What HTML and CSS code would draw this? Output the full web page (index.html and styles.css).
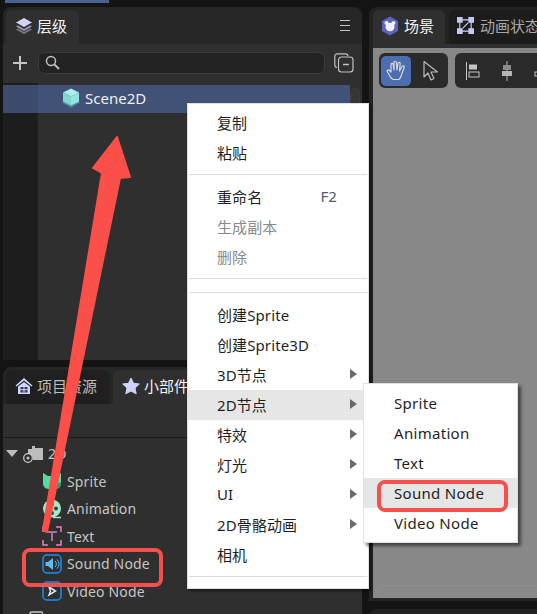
FILE: index.html
```html
<!DOCTYPE html>
<html lang="en">

<head>
    <meta charset="UTF-8">
    <title>LayaAir IDE</title>
    <link rel="stylesheet" href="styles.css">
</head>

<body>
    <div class="top-strip"></div>

    <div class="workspace">
        <div class="left-col">
            <section class="panel hierarchy">
                <div class="tab-bar">
                    <div class="tab tab-active">
                        <svg width="18" height="18" viewBox="0 0 18 18">
                            <path d="M1 12.500 9 17l8-4.500-2-1L9 15l-6-3.500z" fill="#77778f" />
                            <path d="M1 9.500 9 14l8-4.500-2-1L9 12 3 8.500z" fill="#9c9cb8" />
                            <path d="M9 1 17 5.500 9 10 1 5.500z" fill="#d0d3fa" />
                        </svg>
                        <span>层级</span>
                    </div>
                    <div class="menu-lines"><i></i><i></i><i></i></div>
                </div>
                <div class="toolbar">
                    <svg width="14" height="14" viewBox="0 0 14 14">
                        <path d="M7 0v14M0 7h14" stroke="#c4c4c4" stroke-width="2" fill="none" />
                    </svg>
                    <div class="search">
                        <svg width="15" height="15" viewBox="0 0 15 15">
                            <circle cx="6" cy="6" r="4.500" stroke="#bdbdbd" stroke-width="1.500" fill="none" />
                            <path d="M9.500 9.500 14 14" stroke="#bdbdbd" stroke-width="2" />
                        </svg>
                    </div>
                    <svg width="20" height="20" viewBox="0 0 20 20" fill="none" stroke="#c2c2c2" stroke-width="1.200">
                        <path d="M3 14.500A2.500 2.500 0 0 1 .8 12V3.500A2.500 2.500 0 0 1 3.300.8h8A2.500 2.500 0 0 1 14 3" />
                        <rect x="4.500" y="4" width="14.500" height="15" rx="3" />
                        <path d="M9 11.500h6" stroke-width="1.500" />
                    </svg>
                </div>
                <div class="tree">
                    <div class="tree-main">
                        <div class="tree-row">
                            <svg width="20" height="20" viewBox="0 0 20 20">
                                <path d="M1 14.500 10 19.500l9-5-3-2H4z" fill="#4f8f96" />
                                <path d="M10 .5 18 4.500 10 8.500 2 4.500z" fill="#a9efe6" />
                                <path d="M2 4.500 10 8.500V17.500L2 13.500z" fill="#7fd8d0" />
                                <path d="M18 4.500 10 8.500V17.500l8-4z" fill="#93e6dd" />
                            </svg>
                            <span>Scene2D</span>
                        </div>
                    </div>
                    <div class="scrollbar"></div>
                </div>
            </section>

            <section class="panel widgets">
                <div class="tab-bar">
                    <div class="tab tab-dark">
                        <svg width="18" height="18" viewBox="0 0 18 18">
                            <path d="M9 1 .5 8.500l1 1L9 3.500l7.500 6 1-1z" fill="#d0d3fa" />
                            <path d="M3 9.500 9 5l6 4.500V17H3z" fill="#d0d3fa" />
                            <path d="M5.500 10h7v5.500h-7z" fill="#3b3b4d" />
                            <path d="M8.500 10h1v5.500h-1zM5.500 12.300h7v1h-7z" fill="#d0d3fa" />
                        </svg>
                        <span>项目资源</span>
                    </div>
                    <div class="tab tab-active">
                        <svg width="18" height="18" viewBox="0 0 18 18">
                            <path d="M9 1l2.500 5.300 5.800.7-4.300 4 1.200 5.800L9 14l-5.200 2.800L5 11 .7 7l5.800-.7z" fill="#d0d3fa" stroke="#d0d3fa" stroke-linejoin="round" />
                        </svg>
                        <span>小部件</span>
                    </div>
                </div>
                <div class="widget-tools"></div>
                <div class="widget-list">
                    <div class="widget-group">
                        <i class="caret"></i>
                        <svg width="20" height="20" viewBox="0 0 20 20">
                            <path d="M5 5h4V2h3v2h8v12H10a5 5 0 0 0-5-6z" fill="#bdbdbd" />
                            <circle cx="5" cy="14" r="4.300" fill="#2f2f2f" stroke="#c8c8c8" stroke-width="1.300" />
                            <circle cx="5" cy="14" r="1.500" fill="#c8c8c8" />
                        </svg>
                        <span>2D</span>
                    </div>
                    <div class="widget-item">
                        <svg width="20" height="20" viewBox="0 0 20 20">
                            <path d="M1 2l5 3h7l6-3v11a6 6 0 0 1-6 5H7a6 6 0 0 1-6-5z" fill="#52dca2" />
                            <path d="M12 14l7-3v2a6 6 0 0 1-6 5H9z" fill="#2d9a70" />
                        </svg>
                        <span>Sprite</span>
                    </div>
                    <div class="widget-item">
                        <svg width="20" height="20" viewBox="0 0 20 20">
                            <circle cx="10" cy="9.500" r="9" fill="#a9e8c4" />
                            <circle cx="10" cy="5" r="2" fill="#2f4a3e" />
                            <circle cx="14" cy="9.500" r="2" fill="#2f4a3e" />
                            <circle cx="10" cy="14" r="2" fill="#2f4a3e" />
                            <path d="M11 18.500h8" stroke="#a9e8c4" stroke-width="1.500" />
                        </svg>
                        <span>Animation</span>
                    </div>
                    <div class="widget-item">
                        <svg width="20" height="20" viewBox="0 0 20 20" fill="none" stroke="#e77fc4" stroke-width="1.500">
                            <path d="M1 6V1h5M14 1h5v5M19 14v5h-5M6 19H1v-5" />
                            <path d="M5 6h10M10 6v9" stroke="#a8709a" stroke-width="2" />
                        </svg>
                        <span>Text</span>
                    </div>
                    <div class="widget-item">
                        <svg width="20" height="20" viewBox="0 0 20 20">
                            <rect x="1" y="1" width="18" height="18" rx="4" fill="none" stroke="#1f8ef1" stroke-width="1.500" />
                            <path d="M3.500 8H6l5-4v12l-5-4H3.500z" fill="#62baf2" />
                            <path d="M13 7a4 4 0 0 1 0 6M15 5.500a6 6 0 0 1 0 9" fill="none" stroke="#62baf2" />
                        </svg>
                        <span>Sound Node</span>
                    </div>
                    <div class="widget-item">
                        <svg width="20" height="20" viewBox="0 0 20 20">
                            <rect x="1" y="1" width="18" height="18" rx="4" fill="none" stroke="#1f8ef1" stroke-width="1.500" />
                            <path d="M7 6l6.500 4L7 14l1.500-4z" fill="none" stroke="#d8ecfb" stroke-width="1.500" />
                        </svg>
                        <span>Video Node</span>
                    </div>
                    <div class="widget-group">
                        <i class="caret caret-none"></i>
                        <svg width="20" height="20" viewBox="0 0 20 20">
                            <rect x="7" y="3" width="13" height="13" rx="2" fill="none" stroke="#c8c8c8" stroke-width="1.500" />
                        </svg>
                        <span>UI</span>
                    </div>
                </div>
            </section>
        </div>

        <div class="right-col">
            <section class="panel scene-panel">
                <div class="tab-bar scene-tabs">
                    <div class="tab tab-active">
                        <svg width="18" height="20" viewBox="0 0 18 20">
                            <path d="M9 .5 17 5v10l-8 4.500L1 15V5z" fill="#5c65bb" />
                            <circle cx="5.500" cy="7" r="2" fill="#f2f2fa" />
                            <circle cx="12.500" cy="7" r="2" fill="#f2f2fa" />
                            <ellipse cx="9" cy="11" rx="4.500" ry="4.200" fill="#f2f2fa" />
                        </svg>
                        <span>场景</span>
                    </div>
                    <div class="tab tab-plain">
                        <svg width="17" height="17" viewBox="0 0 18 18">
                            <path d="M3 3h12M3 15h12M3 3v12M15 3v12M6 12l6-6" stroke="#d0d3fa" stroke-width="1.200" fill="none" />
                            <path d="M0 0h6v6H0zM12 0h6v6h-6zM0 12h6v6H0zM12 12h6v6h-6z" fill="#c5c9f3" />
                        </svg>
                        <span>动画状态</span>
                    </div>
                </div>
                <div class="scene-view">
                    <div class="scene-tools">
                        <div class="tool-group">
                            <div class="tool-btn tool-on">
                                <svg width="20" height="22" viewBox="0 0 20 22" fill="none" stroke="#d8d8d8" stroke-width="1.200" stroke-linejoin="round">
                                    <path d="M5 18 1.500 12c-1-1.500.8-2.700 2-1.500L5 12V4.500c0-1.600 2-1.600 2.200 0L8 10V2.500c0-1.700 2.300-1.700 2.400 0L11 10l1-6.500c.3-1.600 2.300-1.300 2.200.3L13.500 11l2.500-4.500c.8-1.400 2.700-.6 2.100 1L15.500 15c-.8 2.500-1.500 3.500-2.500 4.500H8c-1.200 0-2-.5-3-1.500z" />
                                </svg>
                            </div>
                            <div class="tool-btn">
                                <svg width="16" height="22" viewBox="0 0 16 22" fill="none" stroke="#b9b9b9" stroke-width="1.200" stroke-linejoin="round">
                                    <path d="M1 1.500V17l4-4 3 7 3-1.500-3-6.500h6.500z" />
                                </svg>
                            </div>
                        </div>
                        <div class="tool-group tool-clip">
                            <svg width="14" height="18" viewBox="0 0 14 18" fill="none" stroke="#c4c4c4">
                                <path d="M.5 0v18" />
                                <rect x="3.500" y="3" width="7" height="4" fill="#c4c4c4" />
                                <rect x="3" y="10" width="10" height="5" />
                            </svg>
                            <svg width="12" height="20" viewBox="0 0 12 20" fill="#b4b4b4">
                                <path d="M5.500 0h1v20h-1z" />
                                <rect x="2" y="4" width="8" height="5" fill="#8c8c8c" />
                                <rect x="1" y="10" width="10" height="5" />
                            </svg>
                            <svg width="14" height="18" viewBox="0 0 14 18" fill="none" stroke="#c4c4c4">
                                <rect x="4" y="4" width="8" height="4" />
                                <rect x="1" y="10" width="10" height="4" />
                            </svg>
                        </div>
                    </div>
                    <div class="scene-scroll"></div>
                </div>
            </section>
            <section class="panel lower-panel"></section>
        </div>
    </div>

    <!-- annotations drawn over the screenshot -->
    <svg class="arrow" width="140" height="410" viewBox="0 0 140 410">
        <path d="M117 5 93 36 102 41 43 398 47 400 120 46 130 45z" fill="#fb4f4a" stroke="#fb4f4a" stroke-width="2" stroke-linejoin="round" />
    </svg>
    <div class="mark mark-list"></div>

    <div class="context-menu">
        <div class="menu-item">复制</div>
        <div class="menu-item">粘贴</div>
        <div class="menu-sep"></div>
        <div class="menu-item">重命名<span class="shortcut">F2</span></div>
        <div class="menu-item disabled">生成副本</div>
        <div class="menu-item disabled">删除</div>
        <div class="menu-sep"></div>
        <div class="menu-sep"></div>
        <div class="menu-item">创建Sprite</div>
        <div class="menu-item">创建Sprite3D</div>
        <div class="menu-item">3D节点<i class="more"></i></div>
        <div class="menu-item hover">2D节点<i class="more"></i></div>
        <div class="menu-item">特效<i class="more"></i></div>
        <div class="menu-item">灯光<i class="more"></i></div>
        <div class="menu-item">UI<i class="more"></i></div>
        <div class="menu-item">2D骨骼动画<i class="more"></i></div>
        <div class="menu-item">相机</div>
        <div class="menu-sep"></div>
    </div>

    <div class="context-menu submenu">
        <div class="menu-item">Sprite</div>
        <div class="menu-item">Animation</div>
        <div class="menu-item">Text</div>
        <div class="menu-item hover">Sound Node</div>
        <div class="menu-item">Video Node</div>
    </div>
    <div class="mark mark-menu"></div>
</body>

</html>
```

FILE: styles.css
```css
* {
    box-sizing: border-box;
}

body {
    margin: 0;
    width: 537px;
    height: 614px;
    overflow: hidden;
    position: relative;
    background-color: #141414;
    font-family: "Noto Sans", "Noto Sans CJK SC", sans-serif;
    font-size: 15px;
    color: #d0d0d0;
}

.top-strip {
    width: 104px;
    height: 3px;
    margin-left: 5px;
    background-color: #4a6190;
}

.workspace {
    display: flex;
    gap: 7px;
    height: 611px;
    padding: 4px 0 0 3px;
}

.left-col {
    width: 359px;
    flex-shrink: 0;
    display: flex;
    flex-direction: column;
    gap: 7px;
}

.right-col {
    width: 200px;
    flex-shrink: 0;
    display: flex;
    flex-direction: column;
    gap: 8px;
}

.panel {
    flex-shrink: 0;
    border-radius: 8px 8px 0 0;
    overflow: hidden;
    background-color: #262626;
}

.hierarchy {
    height: 353px;
    display: flex;
    flex-direction: column;
}

.widgets {
    flex: 1;
    min-height: 0;
}

/* tabs */
.tab-bar {
    height: 37px;
    padding: 3px 0 0 3px;
    display: flex;
    gap: 4px;
    position: relative;
}

.tab {
    height: 34px;
    padding: 0 12px 3px 9px;
    display: flex;
    align-items: center;
    gap: 4px;
    border-radius: 6px 6px 0 0;
    white-space: nowrap;
}

.tab-active {
    background-color: #2f2f2f;
    color: #f4f4f4;
}

.tab-dark {
    background-color: #1f1f1f;
    color: #bdbdbd;
}

.tab-plain {
    color: #a8a8a8;
    background-color: #1c1c1c;
}

.menu-lines {
    position: absolute;
    right: 12px;
    top: 13px;
    width: 10px;
}

.menu-lines i {
    display: block;
    height: 1px;
    background-color: #c4c4c4;
    margin-bottom: 4px;
}

/* hierarchy */
.toolbar {
    height: 39px;
    padding: 0 6px 2px 10px;
    display: flex;
    align-items: center;
    background-color: #2f2f2f;
    gap: 11px;
}

.toolbar > svg:last-child {
    margin-left: -2px;
}

.search {
    width: 287px;
    height: 22px;
    padding-left: 6px;
    display: flex;
    align-items: center;
    background-color: #232323;
    border: 1px solid #3b3b3b;
    border-radius: 6px;
}

.tree {
    flex: 1;
    display: flex;
    background-color: #2f2f2f;
}

.tree-main {
    width: 347px;
    padding-top: 2px;
    background: linear-gradient(90deg, #1d1d1d 35px, #2f2f2f 35px);
}

.tree-row {
    height: 28px;
    padding: 0 0 3px 58px;
    display: flex;
    align-items: center;
    gap: 4px;
    color: #f0f0f0;
    background: linear-gradient(90deg, #3d4b6c 35px, #425176 35px);
}

.scrollbar {
    width: 10px;
    margin-top: 5px;
    background-color: #363636;
    border: 1px solid #3e3e3e;
    border-radius: 5px 5px 0 0;
}

/* widgets */
.widget-tools {
    height: 34px;
    background-color: #2f2f2f;
    border-bottom: 1px solid #1b1b1b;
}

.widget-list {
    height: 210px;
    padding-top: 2px;
    background-color: #2f2f2f;
}

.widget-group,
.widget-item {
    height: 27.500px;
    display: flex;
    align-items: center;
    gap: 5px;
    font-size: 14px;
    letter-spacing: 0.150px;
    color: #c6c6c6;
}

.widget-group {
    padding-left: 3px;
}

.widget-item {
    padding-left: 39px;
}

.caret {
    width: 0;
    height: 0;
    border-left: 6px solid transparent;
    border-right: 6px solid transparent;
    border-top: 7px solid #bdbdbd;
}

.caret-none {
    border-top-color: transparent;
}

/* scene */
.scene-panel {
    height: 594px;
    display: flex;
    flex-direction: column;
    padding-bottom: 3px;
    background-color: #232323;
}

.scene-tabs {
    flex-shrink: 0;
    padding-left: 4px;
}

.scene-tabs .tab {
    padding-left: 8px;
    padding-right: 11px;
}

.scene-tabs .tab-active {
    gap: 5px;
}

.scene-tabs .tab-plain {
    gap: 6px;
}

.scene-view {
    flex: 1;
    margin-left: 4px;
    border-top: 4px solid #2f2f2f;
    background-color: #888888;
    display: flex;
    flex-direction: column;
    justify-content: space-between;
}

.scene-tools {
    display: flex;
    gap: 7px;
    padding: 5px 0 0 6px;
}

.tool-group {
    height: 35px;
    padding: 2px;
    display: flex;
    align-items: center;
    background-color: #2a2a2a;
    border-radius: 6px;
}

.tool-btn {
    width: 30px;
    height: 30px;
    margin-right: 5px;
    display: flex;
    align-items: center;
    justify-content: center;
    border-radius: 5px;
}

.tool-btn:last-child {
    margin-right: 0;
}

.tool-on {
    background-color: #4c6db0;
}

.tool-clip {
    width: 120px;
    padding-left: 11px;
    gap: 21px;
}

.scene-scroll {
    height: 13px;
    margin: 0 0 0 3px;
    border: 1px solid #8f8f8f;
    border-radius: 6px;
}

.lower-panel {
    height: 20px;
    background-color: #222222;
}

/* context menu */
.context-menu {
    position: absolute;
    left: 187px;
    top: 103px;
    width: 182px;
    padding: 4px 0;
    background-color: #ffffff;
    border: 1px solid #e0e0e0;
    box-shadow: 2px 2px 3px rgba(0, 0, 0, 0.45);
    color: #1f1f1f;
    letter-spacing: 0.100px;
}

.submenu {
    left: 363px;
    top: 383px;
    width: 155px;
    box-shadow: 3px 3px 3px rgba(0, 0, 0, 0.5);
    letter-spacing: 0.300px;
}

.menu-item {
    height: 30px;
    padding: 0 11px 2px 29px;
    display: flex;
    align-items: center;
    justify-content: space-between;
}

.submenu .menu-item {
    padding-left: 30px;
    padding-bottom: 0;
}

.hover {
    background-color: #e6e6e6;
}

.disabled {
    color: #8a8a8a;
}

.shortcut {
    margin-right: 20px;
    color: #555b6b;
}

.more {
    width: 0;
    height: 0;
    border-top: 5px solid transparent;
    border-bottom: 5px solid transparent;
    border-left: 7px solid #6a6a6a;
}

.menu-sep {
    height: 1px;
    margin: 6px 1px 7px;
    background-color: #dcdcdc;
}

.menu-sep + .menu-sep {
    margin-top: 13px;
}

/* red annotations */
.arrow {
    position: absolute;
    left: 0;
    top: 132px;
}

.mark {
    position: absolute;
    border: 4px solid #f5504d;
    border-radius: 8px;
}

.mark-list {
    left: 22px;
    top: 548px;
    width: 141px;
    height: 39px;
}

.mark-menu {
    left: 377px;
    top: 480px;
    width: 131px;
    height: 32px;
}
```
